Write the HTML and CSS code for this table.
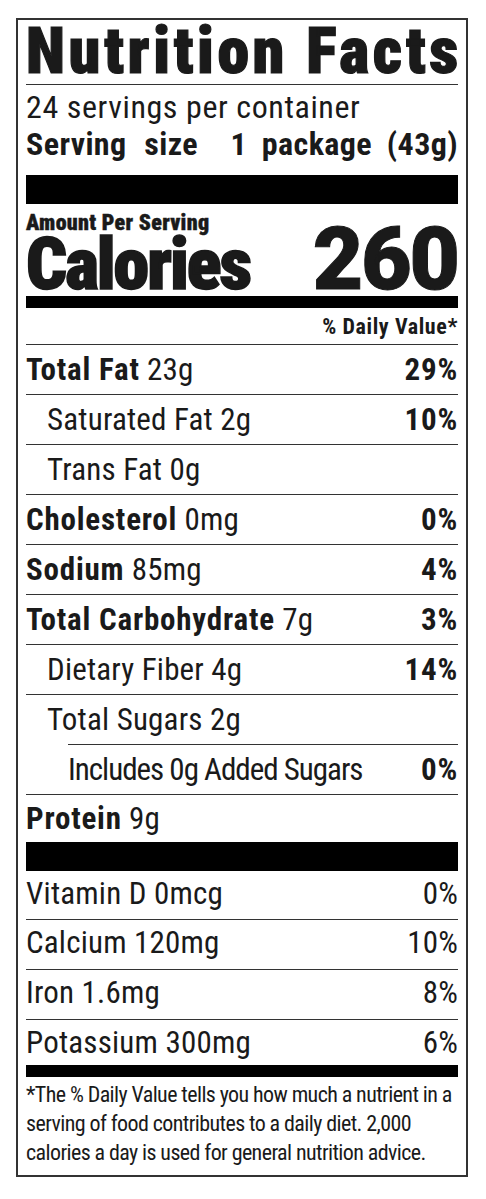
FILE: index.html
```html
<!DOCTYPE html>
<html lang="en">
<head>
  <meta charset="UTF-8" />
  <meta name="viewport" content="width=device-width, initial-scale=1.0"/>
  <title>Nutrition Facts</title>
  <link rel="stylesheet" href="styles.css">
</head>
<body>
  <section class="label">
    <h1 class="title">Nutrition Facts</h1>
    <div class="servings">24 servings per container</div>
    <div class="serving-size"><span>Serving size</span><span>1 package (43g)</span></div>
    <div class="bar bar-lg"></div>

    <div class="calories">
      <div class="cal-left">
        <div class="amount">Amount Per Serving</div>
        <div class="cal-word">Calories</div>
      </div>
      <div class="cal-num">260</div>
    </div>
    <div class="bar bar-md"></div>

    <div class="dv-head">% Daily Value*</div>

    <div class="row"><span><b>Total Fat</b> 23g</span><b>29%</b></div>
    <div class="row sub"><span>Saturated Fat 2g</span><b>10%</b></div>
    <div class="row sub"><span>Trans Fat 0g</span></div>
    <div class="row"><span><b>Cholesterol</b> 0mg</span><b>0%</b></div>
    <div class="row"><span><b>Sodium</b> 85mg</span><b>4%</b></div>
    <div class="row"><span><b>Total Carbohydrate</b> 7g</span><b>3%</b></div>
    <div class="row sub"><span>Dietary Fiber 4g</span><b>14%</b></div>
    <div class="row sub"><span>Total Sugars 2g</span></div>
    <div class="row subsub"><span class="tight">Includes 0g Added Sugars</span><b>0%</b></div>
    <div class="row protein"><span><b>Protein</b> 9g</span></div>
    <div class="bar bar-lg"></div>

    <div class="row vit first"><span>Vitamin D 0mcg</span><span>0%</span></div>
    <div class="row vit"><span>Calcium 120mg</span><span>10%</span></div>
    <div class="row vit"><span>Iron 1.6mg</span><span>8%</span></div>
    <div class="row vit last"><span>Potassium 300mg</span><span>6%</span></div>
    <div class="bar bar-md"></div>

    <p class="footnote">*The % Daily Value tells you how much a nutrient in a<br>serving of food contributes to a daily diet. 2,000<br>calories a day is used for general nutrition advice.</p>
  </section>
</body>
</html>
```

FILE: styles.css
```css
html, body { margin: 0; padding: 0; background: #fff; }
body { font-family: "Roboto Condensed", "Liberation Sans", Arial, sans-serif; color: #1a1a1a; }

.label { margin: 18px 0 0 16px; width: 452px; box-sizing: border-box; border: 2px solid #333; padding: 0 8px 8px 8px; }

.title { margin: 0; height: 64px; border-bottom: 1px solid #333; font-size: 64px; line-height: 64px; font-weight: 900; -webkit-text-stroke: 1.2px #1a1a1a; letter-spacing: 3.6px; white-space: nowrap; }

.servings { padding-top: 4px; font-size: 32px; line-height: 37px; letter-spacing: 0.6px; }
.serving-size { display: flex; justify-content: space-between; font-size: 32px; line-height: 37px; font-weight: bold; letter-spacing: 0.4px; word-spacing: 7px; }
.serving-size span:first-child { word-spacing: 10px; }

.bar { background: #000; }
.bar-lg { height: 29px; }
.bar-md { height: 12px; }
.serving-size + .bar-lg { margin-top: 12px; }

.calories { display: flex; justify-content: space-between; align-items: flex-end; height: 92px; }
.amount { font-size: 22px; line-height: 22px; font-weight: 900; -webkit-text-stroke: 0.4px #1a1a1a; letter-spacing: 0.3px; padding-top: 7px; }
.cal-word { font-size: 72px; line-height: 62px; font-weight: 900; -webkit-text-stroke: 1.5px #1a1a1a; letter-spacing: -2px; }
.cal-num { font-family: "Roboto", "Liberation Sans", Arial, sans-serif; font-size: 87px; line-height: 74px; font-weight: 900; -webkit-text-stroke: 1px #1a1a1a; letter-spacing: -2px; }

.dv-head { text-align: right; font-size: 22px; line-height: 35px; font-weight: bold; letter-spacing: 0.6px; padding-top: 1px; }

.row { display: flex; justify-content: space-between; border-top: 1px solid #333; height: 49px; font-size: 31px; line-height: 49px; letter-spacing: 0.2px; white-space: nowrap; }
.row b { font-weight: bold; letter-spacing: 0.8px; }
.row.sub { padding-left: 21px; }
.row.subsub { padding-left: 42px; border-top: 0; background: linear-gradient(#333, #333) 42px 0 / calc(100% - 42px) 1px no-repeat; padding-top: 1px; }
.row .tight { letter-spacing: -1px; }
.row.protein { height: 47px; line-height: 47px; }
.row.vit { line-height: 46px; }
.row.vit.first { border-top: 0; height: 48px; }
.row.vit.last { height: 45px; }

.footnote { margin: 0; padding-top: 3px; font-size: 22px; line-height: 29px; letter-spacing: -0.6px; white-space: nowrap; }
```
